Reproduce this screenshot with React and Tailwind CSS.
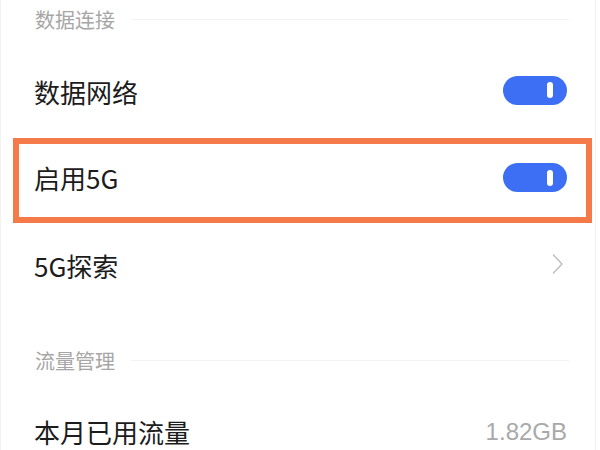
import React from "react";

const font = { fontFamily: '"Noto Sans CJK SC", "Noto Sans", sans-serif' };

function Toggle() {
  return (
    <div className="w-[64px] h-[29px] rounded-full bg-[#3d6ff4] flex items-center justify-end pr-[14px]">
      <div className="w-[6px] h-[16px] rounded-full bg-white" />
    </div>
  );
}

function SectionHeader({ title, className = "" }) {
  return (
    <div className={"flex items-center shrink-0 h-[40px] pl-[34px] pr-[26px] gap-[16px] " + className}>
      <span className="text-[20px] leading-none text-[#a6a6a6] whitespace-nowrap">{title}</span>
      <div className="flex-1 h-px bg-[#f3f3f3] -mt-[2px]" />
    </div>
  );
}

export default function App() {
  return (
    <div className="w-[600px] h-[450px] overflow-hidden bg-white flex" style={font}>
      <div className="w-[596px] h-full border-l border-r border-[#f2f2f2] flex flex-col">
        <SectionHeader title="数据连接" />
        <div className="flex items-center justify-between h-[98px] pt-[6px] pl-[33px] pr-[28px] shrink-0">
          <span className="text-[26px] leading-none text-[#1c1c1c]">数据网络</span>
          <div className="-mt-[4px]"><Toggle /></div>
        </div>
        <div className="ml-[12px] mr-[3px] h-[85px] border-[6px] border-[#f47a4a] flex items-center justify-between pl-[15px] pr-[19px] pb-[6px] shrink-0">
          <span className="text-[26px] leading-none text-[#1c1c1c]">启用5G</span>
          <Toggle />
        </div>
        <div className="flex items-center justify-between h-[84px] pl-[33px] pr-[31px] shrink-0">
          <span className="text-[26px] leading-none text-[#1c1c1c] mt-[2px]">5G探索</span>
          <svg width="13" height="22" viewBox="0 0 13 22" fill="none" className="-mt-[2px]">
            <polyline points="2.5,2 11,11 2.5,20" stroke="#bdbdbd" strokeWidth="1.4" strokeLinecap="round" strokeLinejoin="round" />
          </svg>
        </div>
        <SectionHeader title="流量管理" className="mt-[34px]" />
        <div className="flex items-center justify-between h-[102px] pl-[33px] pr-[28px] shrink-0">
          <span className="text-[26px] leading-none text-[#1c1c1c]">本月已用流量</span>
          <span className="text-[24px] leading-none text-[#a9a9a9]" style={{ fontFamily: '"Liberation Sans", Arial, sans-serif' }}>1.82GB</span>
        </div>
      </div>
    </div>
  );
}
